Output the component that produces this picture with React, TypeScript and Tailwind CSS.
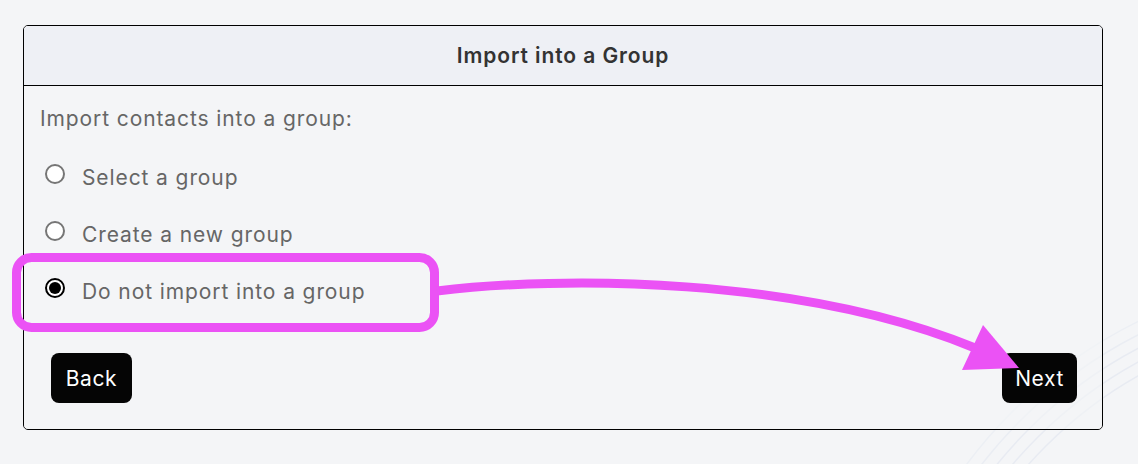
import React from "react";

function Radio({ checked }: { checked?: boolean }) {
  if (checked) {
    return (
      <span className="flex h-[20px] w-[20px] shrink-0 items-center justify-center rounded-full border-2 border-black bg-white">
        <span className="h-[12px] w-[12px] rounded-full bg-black" />
      </span>
    );
  }
  return <span className="h-[20px] w-[20px] shrink-0 rounded-full border-2 border-[#767676] bg-white" />;
}

export default function App() {
  const font = { fontFamily: "Inter, 'Open Sans', Arial, sans-serif" };
  return (
    <div className="relative h-[464px] w-[1138px] overflow-hidden bg-[#f4f5f7]" style={font}>
      <svg className="absolute left-0 top-0" width="1138" height="464" viewBox="0 0 1138 464" fill="none">
        <circle cx="1350" cy="750" r="430" stroke="#e8ebf2" strokeWidth="1.5" />
        <circle cx="1350" cy="750" r="442" stroke="#e8ebf2" strokeWidth="1.5" />
        <circle cx="1350" cy="750" r="454" stroke="#e8ebf2" strokeWidth="1.5" />
        <circle cx="1350" cy="750" r="466" stroke="#eaedf3" strokeWidth="1.5" />
        <circle cx="1350" cy="750" r="478" stroke="#eceff4" strokeWidth="1.5" />
      </svg>

      <div className="relative pl-[23px] pt-[25px]">
        <div className="flex h-[405px] w-[1080px] flex-col overflow-hidden rounded-[5px] border border-black">
          <div className="flex h-[60px] shrink-0 items-center justify-center border-b border-black bg-[#eef0f5]">
            <span className="text-[21px] font-semibold tracking-[0.9px] text-[#333333]">Import into a Group</span>
          </div>
          <div className="flex flex-1 flex-col bg-[#f4f5f7]/60">
            <div className="mt-[18px] h-[30px] pl-[16px] text-[21px] leading-[30px] tracking-[0.9px] text-[#666666]">
              Import contacts into a group:
            </div>
            <div className="mt-[20px] flex flex-col gap-[17px] pl-[21px]">
              <div className="flex h-[40px] items-center gap-[17px]">
                <Radio />
                <span className="mt-[7px] text-[21px] tracking-[0.9px] text-[#666666]">Select a group</span>
              </div>
              <div className="flex h-[40px] items-center gap-[17px]">
                <Radio />
                <span className="mt-[7px] text-[21px] tracking-[0.9px] text-[#666666]">Create a new group</span>
              </div>
              <div className="flex h-[40px] items-center gap-[17px]">
                <Radio checked />
                <span className="mt-[7px] text-[21px] tracking-[0.9px] text-[#666666]">Do not import into a group</span>
              </div>
            </div>
            <div className="mt-[45px] flex items-center justify-between pl-[27px] pr-[25px]">
              <button className="h-[50px] w-[81px] rounded-[8px] bg-[#050505] pt-[2px] text-[21px] tracking-[0.6px] text-white">Back</button>
              <button className="h-[50px] w-[75px] rounded-[8px] bg-[#050505] pt-[2px] text-[21px] tracking-[0.6px] text-white">Next</button>
            </div>
          </div>
        </div>
      </div>

      <svg className="pointer-events-none absolute left-0 top-0" width="1138" height="464" viewBox="0 0 1138 464" fill="none">
        <rect x="16.5" y="257.5" width="418" height="70" rx="15" stroke="#eb52f5" strokeWidth="9" />
        <path d="M437 291 C 560 276, 800 276, 975 348" stroke="#eb52f5" strokeWidth="9" />
        <polygon points="983,325 962,370 1019,368" fill="#eb52f5" />
      </svg>
    </div>
  );
}
